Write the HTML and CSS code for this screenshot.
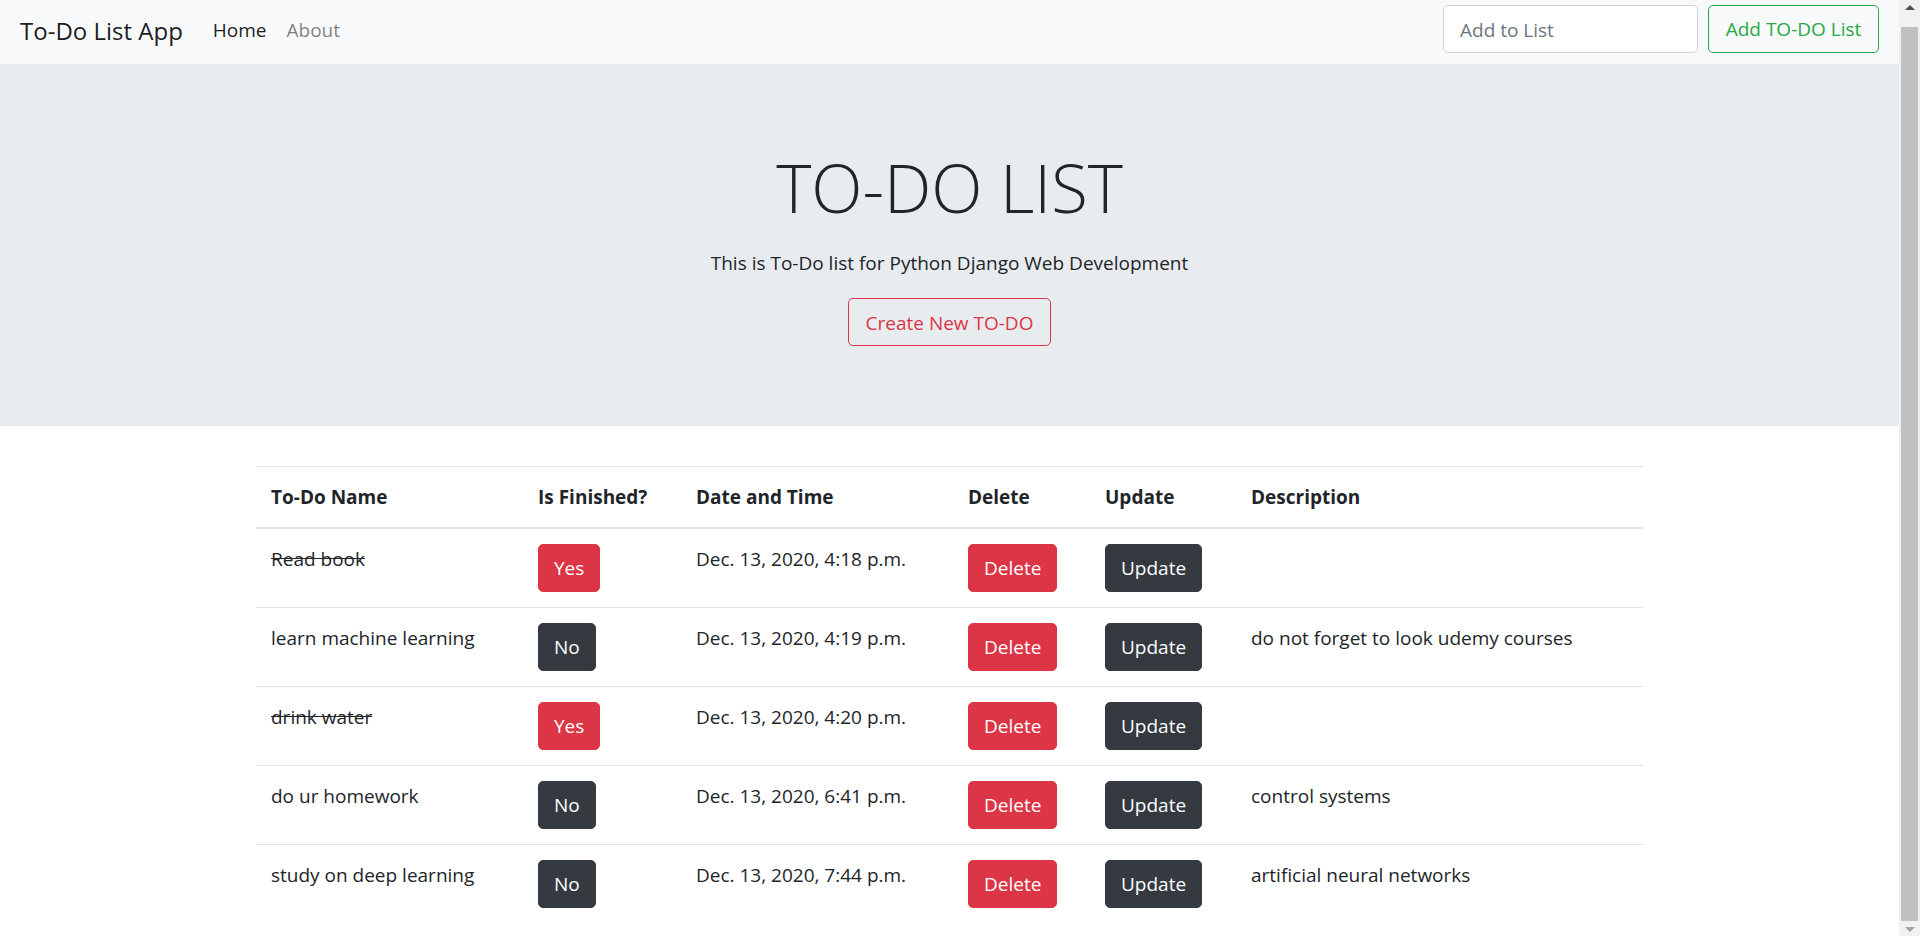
FILE: index.html
```html
<!DOCTYPE html>
<html lang="en">
<head>
<meta charset="utf-8">
<title>To-Do List App</title>
<link rel="stylesheet" href="styles.css">
</head>
<body>
<div class="page">
  <nav class="navbar">
    <a class="brand" href="#">To-Do List App</a>
    <ul class="nav">
      <li><a class="nav-link active" href="#">Home</a></li>
      <li><a class="nav-link" href="#">About</a></li>
    </ul>
    <form class="nav-form">
      <input class="form-control" type="text" placeholder="Add to List">
      <button class="btn btn-outline-success" type="button">Add TO-DO List</button>
    </form>
  </nav>

  <header class="jumbotron">
    <h1 class="display">TO-DO LIST</h1>
    <p class="intro">This is To-Do list for Python Django Web Development</p>
    <a class="btn btn-outline-danger" href="#">Create New TO-DO</a>
  </header>

  <main class="container">
    <table class="table">
      <colgroup>
        <col class="c-name"><col class="c-fin"><col class="c-date"><col class="c-del"><col class="c-upd"><col class="c-desc">
      </colgroup>
      <thead>
        <tr>
          <th>To-Do Name</th>
          <th>Is Finished?</th>
          <th>Date and Time</th>
          <th>Delete</th>
          <th>Update</th>
          <th>Description</th>
        </tr>
      </thead>
      <tbody>
        <tr>
          <td><s>Read book</s></td>
          <td><button class="btn btn-danger">Yes</button></td>
          <td>Dec. 13, 2020, 4:18 p.m.</td>
          <td><button class="btn btn-danger">Delete</button></td>
          <td><button class="btn btn-dark">Update</button></td>
          <td></td>
        </tr>
        <tr>
          <td>learn machine learning</td>
          <td><button class="btn btn-dark">No</button></td>
          <td>Dec. 13, 2020, 4:19 p.m.</td>
          <td><button class="btn btn-danger">Delete</button></td>
          <td><button class="btn btn-dark">Update</button></td>
          <td>do not forget to look udemy courses</td>
        </tr>
        <tr>
          <td><s>drink water</s></td>
          <td><button class="btn btn-danger">Yes</button></td>
          <td>Dec. 13, 2020, 4:20 p.m.</td>
          <td><button class="btn btn-danger">Delete</button></td>
          <td><button class="btn btn-dark">Update</button></td>
          <td></td>
        </tr>
        <tr>
          <td>do ur homework</td>
          <td><button class="btn btn-dark">No</button></td>
          <td>Dec. 13, 2020, 6:41 p.m.</td>
          <td><button class="btn btn-danger">Delete</button></td>
          <td><button class="btn btn-dark">Update</button></td>
          <td>control systems</td>
        </tr>
        <tr>
          <td>study on deep learning</td>
          <td><button class="btn btn-dark">No</button></td>
          <td>Dec. 13, 2020, 7:44 p.m.</td>
          <td><button class="btn btn-danger">Delete</button></td>
          <td><button class="btn btn-dark">Update</button></td>
          <td>artificial neural networks</td>
        </tr>
      </tbody>
    </table>
  </main>
</div>
<div class="scrollbar" aria-hidden="true">
  <div class="arrow arrow-up"></div>
  <div class="track"><div class="thumb"></div></div>
  <div class="arrow arrow-down"></div>
</div>
</body>
</html>
```

FILE: styles.css
```css
* { box-sizing: border-box; }

html, body {
  margin: 0;
  height: 936px;
  overflow: hidden;
}

body {
  display: flex;
  font-family: "Open Sans", "Noto Sans", sans-serif;
  font-size: 19px;
  line-height: 30px;
  color: #212529;
  background: #fff;
}

/* page is shown scrolled down by a few pixels */
.page {
  flex: 1;
  min-width: 0;
  margin-top: -6px;
}

/* navbar */
.navbar {
  display: flex;
  align-items: center;
  height: 70px;
  padding: 10px 20px;
  background: #f8f9fa;
}

.brand {
  font-size: 24px;
  line-height: 37.5px;
  padding: 8px 0 4px;
  margin-right: 20px;
  color: rgba(0, 0, 0, .9);
  text-decoration: none;
  white-space: nowrap;
}

.nav {
  display: flex;
  list-style: none;
  margin: 0;
  padding: 0;
  flex: 1;
}

.nav-link {
  display: block;
  padding: 11px 10px 9px;
  color: rgba(0, 0, 0, .5);
  text-decoration: none;
}

.nav-link.active { color: rgba(0, 0, 0, .9); }

.nav-form {
  display: flex;
  align-items: center;
  gap: 10px;
}

.form-control {
  width: 255px;
  height: 47.5px;
  padding: 8px 16px 7px;
  font: inherit;
  color: #495057;
  background: #fff;
  border: 1px solid #ced4da;
  border-radius: 5px;
}

.form-control::placeholder { color: #6c757d; }

/* buttons */
.btn {
  display: inline-block;
  vertical-align: top;
  font: inherit;
  font-size: 19px;
  line-height: 30px;
  padding: 8px 15px;
  border: 1px solid transparent;
  border-radius: 5px;
  text-decoration: none;
  cursor: pointer;
  white-space: nowrap;
}

.btn-outline-success {
  color: #28a745;
  border-color: #28a745;
  background: transparent;
  width: 171px;
  padding-top: 8px;
  padding-bottom: 7.5px;
}

.btn-outline-danger {
  color: #dc3545;
  border-color: #dc3545;
  background: transparent;
  width: 203px;
  padding-top: 8.5px;
  padding-bottom: 7.5px;
}

.btn-danger {
  color: #fff;
  background: #dc3545;
  border-color: #dc3545;
}

.btn-dark {
  color: #fff;
  background: #343a40;
  border-color: #343a40;
}

/* jumbotron */
.jumbotron {
  background: #e9ecef;
  padding: 81px 40px 80px;
  margin: 0 0 40px;
  text-align: center;
}

.display {
  font-size: 67px;
  font-weight: 300;
  line-height: 84px;
  margin: 0 0 19px;
}

.intro {
  margin: 0 0 20px;
}

/* table */
.container {
  width: 1425px;
  margin: 0 auto;
  padding: 0 19px;
}

.table {
  width: 100%;
  border-collapse: collapse;
  table-layout: fixed;
  margin-bottom: 20px;
}

.c-name { width: 267px; }
.c-fin  { width: 158px; }
.c-date { width: 272px; }
.c-del  { width: 137px; }
.c-upd  { width: 146px; }

.table th,
.table td {
  padding: 15px;
  text-align: left;
  vertical-align: top;
  border-top: 1px solid #dee2e6;
}

.table thead th {
  font-weight: 700;
  border-bottom: 2px solid #dee2e6;
}

/* scrollbar */
.scrollbar {
  width: 21px;
  flex-shrink: 0;
  height: 936px;
  background: #f1f1f1;
  display: flex;
  flex-direction: column;
  align-items: center;
}

.arrow {
  width: 0;
  height: 0;
  border-left: 5px solid transparent;
  border-right: 5px solid transparent;
}

.arrow-up {
  margin: 5px 0 6px;
  border-bottom: 5px solid #505050;
}

.arrow-down {
  margin: 6px 0 4px;
  border-top: 5px solid #a3a3a3;
}

.track {
  flex: 1;
  width: 100%;
  display: flex;
  padding: 11px 2px 0;
}

.thumb {
  flex: 1;
  background: #c1c1c1;
}
```
